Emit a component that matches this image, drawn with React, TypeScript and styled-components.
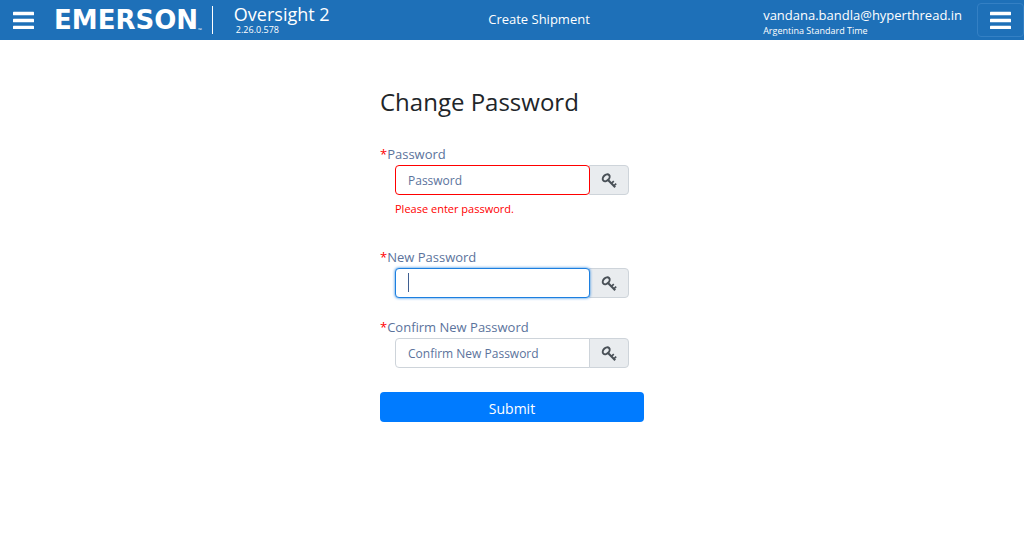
import React, { useState } from 'react';
import styled, { createGlobalStyle, css } from 'styled-components';

const GlobalStyle = createGlobalStyle`
  *, *::before, *::after { box-sizing: border-box; }
  body {
    margin: 0;
    background: #fff;
    color: #212529;
    font-family: "Open Sans", sans-serif;
    font-size: 13px;
    line-height: 20px;
  }
`;

const TopBar = styled.header`
  display: grid;
  grid-template-columns: 1fr auto 1fr;
  align-items: center;
  height: 40px;
  background: #1e70b8;
  color: #fff;
`;

const BarStart = styled.div`
  display: flex;
  align-items: center;
`;

const BarEnd = styled(BarStart)`
  justify-content: flex-end;
  gap: 15px;
`;

const MenuButton = styled.button<{ $outlined?: boolean }>`
  display: flex;
  align-items: center;
  justify-content: center;
  width: 47px;
  height: 34px;
  padding: 0;
  border: 1px solid ${(p) => (p.$outlined ? '#3480c4' : 'transparent')};
  border-radius: 4px;
  background: transparent;
  color: inherit;
  cursor: pointer;
`;

const Logo = styled.a`
  display: flex;
  align-items: flex-end;
  height: 28px;
  margin-left: 7px;
  padding-right: 10px;
  border-right: 1px solid #fff;
  color: #fff;
  text-decoration: none;
  font: bold 26px/28px "DejaVu Sans", sans-serif;
`;

const TradeMark = styled.span`
  font: 5px/8px "Open Sans", sans-serif;
`;

const Product = styled.div`
  margin-left: 21px;
  padding-top: 1px;
`;

const ProductName = styled.div`
  font-size: 18px;
  line-height: 18px;
`;

const Version = styled.div`
  padding: 1px 0 0 2px;
  font-size: 9px;
  line-height: 12px;
`;

const PageName = styled.div`
  padding: 0 0 2px 54px;
  font-size: 13px;
`;

const User = styled.div`
  padding-top: 2px;
`;

const UserMail = styled.div`
  font-size: 13px;
  line-height: 18px;
`;

const TimeZone = styled.div`
  padding-top: 1px;
  font-size: 9px;
  line-height: 12px;
`;

const Form = styled.form`
  width: 264px;
  max-width: 100%;
  margin: 0 auto;
  padding-top: 46px;
`;

const Title = styled.h1`
  margin: 0 0 27px;
  font-size: 24px;
  font-weight: 400;
  line-height: 32px;
`;

const Field = styled.div`
  margin-bottom: 20px;
`;

const Label = styled.label`
  display: block;
  margin-bottom: 2px;
  line-height: 18px;
  color: #5b739c;
`;

const Required = styled.span`
  color: #f00;
`;

const InputGroup = styled.div`
  position: relative;
  display: flex;
  height: 30px;
  margin: 0 15px;
`;

const Caret = styled.span`
  display: none;
  position: absolute;
  z-index: 2;
  top: 5px;
  left: 13px;
  width: 1px;
  height: 19px;
  background: #3f5f91;
  pointer-events: none;
`;

const Input = styled.input<{ $invalid?: boolean }>`
  flex: 1;
  min-width: 0;
  padding: 5px 12px 3px;
  border: 1px solid #ced4da;
  border-radius: 4px 0 0 4px;
  background: #fff;
  color: #495057;
  font: 12px/20px "Open Sans", sans-serif;
  outline: none;

  &::placeholder { color: #5b739c; opacity: 1; }
  &:focus {
    z-index: 1;
    border-color: #1c7fe0;
    border-radius: 4px;
    box-shadow: 0 0 3px #1c7fe0;
    caret-color: transparent;
  }
  &:focus::placeholder { color: transparent; }
  &:focus:placeholder-shown ~ ${Caret} { display: block; }
  &:focus:not(:placeholder-shown) { caret-color: #3f5f91; }
  ${(p) => p.$invalid && css`
    z-index: 1;
    border-color: #f00;
    border-radius: 4px;
  `}
`;

const Addon = styled.span`
  display: flex;
  align-items: center;
  justify-content: center;
  width: 40px;
  margin-left: -1px;
  padding-top: 2px;
  border: 1px solid #ced4da;
  border-radius: 0 4px 4px 0;
  background: #e9ecef;
  color: #495057;
`;

const ErrorText = styled.p`
  margin: 4px 15px 0;
  padding-bottom: 9px;
  font-size: 11px;
  color: #f00;
`;

const Submit = styled.button`
  display: block;
  width: 100%;
  height: 30px;
  margin-top: 24px;
  padding: 4px 0 0;
  border: 0;
  border-radius: 4px;
  background: #007bff;
  color: #fff;
  font: 14px/20px "Open Sans", sans-serif;
  cursor: pointer;
`;

const BarsIcon = () => (
  <svg width="21" height="18" viewBox="0 0 21 18" fill="currentColor" aria-hidden="true">
    <rect y="0.7" width="21" height="3.6" rx="0.6" />
    <rect y="7.7" width="21" height="3.6" rx="0.6" />
    <rect y="14.7" width="21" height="3.3" rx="0.6" />
  </svg>
);

const KeyIcon = () => (
  <svg width="16" height="16" viewBox="0 0 16 16" fill="none" stroke="currentColor" aria-hidden="true">
    <ellipse cx="5.2" cy="4.8" rx="4" ry="2.8" transform="rotate(-45 5.2 4.8)" strokeWidth="2" />
    <path d="M7 7 L14.2 14.2" strokeWidth="2.1" />
    <path d="M10.4 10.4 L12.8 8.2 M12.8 12.8 L15.2 10.6" strokeWidth="1.7" />
  </svg>
);

type PasswordFieldProps = {
  id: string;
  label: string;
  error?: string;
  autoFocus?: boolean;
};

function PasswordField({ id, label, error, autoFocus }: PasswordFieldProps) {
  const [value, setValue] = useState('');
  return (
    <Field>
      <Label htmlFor={id}><Required>*</Required>{label}</Label>
      <InputGroup>
        <Input
          id={id}
          type="password"
          placeholder={label}
          value={value}
          onChange={(e) => setValue(e.target.value)}
          autoFocus={autoFocus}
          $invalid={Boolean(error)}
          aria-invalid={Boolean(error)}
        />
        <Addon><KeyIcon /></Addon>
        <Caret />
      </InputGroup>
      {error && <ErrorText>{error}</ErrorText>}
    </Field>
  );
}

export default function App() {
  return (
    <>
      <GlobalStyle />
      <TopBar>
        <BarStart>
          <MenuButton type="button" aria-label="Main menu"><BarsIcon /></MenuButton>
          <Logo href="#">EMERSON<TradeMark>™</TradeMark></Logo>
          <Product>
            <ProductName>Oversight 2</ProductName>
            <Version>2.26.0.578</Version>
          </Product>
        </BarStart>
        <PageName>Create Shipment</PageName>
        <BarEnd>
          <User>
            <UserMail>vandana.bandla@hyperthread.in</UserMail>
            <TimeZone>Argentina Standard Time</TimeZone>
          </User>
          <MenuButton type="button" aria-label="User menu" $outlined><BarsIcon /></MenuButton>
        </BarEnd>
      </TopBar>
      <main>
        <Form onSubmit={(e) => e.preventDefault()}>
          <Title>Change Password</Title>
          <PasswordField id="password" label="Password" error="Please enter password." />
          <PasswordField id="new-password" label="New Password" autoFocus />
          <PasswordField id="confirm-password" label="Confirm New Password" />
          <Submit type="submit">Submit</Submit>
        </Form>
      </main>
    </>
  );
}
